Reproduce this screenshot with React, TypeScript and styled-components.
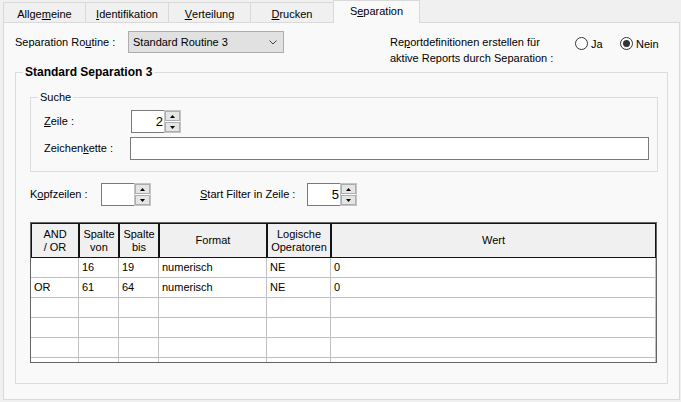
import React from 'react';
import styled, { createGlobalStyle } from 'styled-components';

const Global = createGlobalStyle`
  html, body { margin: 0; padding: 0; background: #f0f0f0; }
  body { font-family: 'Liberation Sans', Arial, sans-serif; font-size: 11px; color: #000; }
  *, *::before, *::after { box-sizing: border-box; }
`;

const Window = styled.div`
  width: 681px;
  height: 402px;
  background: #f0f0f0;
  display: flex;
  flex-direction: column;
  overflow: hidden;
`;

const TabStrip = styled.div`
  display: flex;
  align-items: flex-end;
  height: 22px;
  padding-left: 3px;
  position: relative;
  z-index: 1;
`;

const Tab = styled.div<{ $w: number; $active?: boolean }>`
  width: ${p => p.$w}px;
  height: ${p => (p.$active ? 23 : 20)}px;
  margin-bottom: ${p => (p.$active ? -1 : 0)}px;
  margin-left: -1px;
  &:first-child { margin-left: 0; }
  border: 1px solid #d9d9d9;
  border-bottom: none;
  background: ${p => (p.$active ? '#f9f9f9' : '#f0f0f0')};
  display: flex;
  justify-content: center;
  align-items: center;
  padding-bottom: ${p => (p.$active ? 3 : 0)}px;
  padding-top: ${p => (p.$active ? 0 : 2)}px;
  position: relative;
  z-index: ${p => (p.$active ? 2 : 1)};
`;

const U = styled.span`
  text-decoration: underline;
  text-underline-offset: 1px;
`;

const Panel = styled.div`
  margin-left: 3px;
  width: 677px;
  height: 378px;
  background: #f9f9f9;
  border: 1px solid #d9d9d9;
  padding-top: 8px;
  display: flex;
  flex-direction: column;
`;

const TopRow = styled.div`
  display: flex;
  height: 34px;
  padding-left: 11px;
`;

const Label = styled.div<{ $w: number; $h?: number }>`
  width: ${p => p.$w}px;
  flex: none;
  line-height: ${p => p.$h ?? 22}px;
  white-space: nowrap;
`;

const Combo = styled.div`
  width: 156px;
  height: 22px;
  border: 1px solid #adadad;
  background: #e1e1e1;
  display: flex;
  align-items: center;
  justify-content: space-between;
  padding: 0 6px 0 4px;
`;

const ReportText = styled.div`
  margin-left: 106px;
  width: 185px;
  padding-top: 3px;
  line-height: 16px;
  white-space: nowrap;
`;

const Radios = styled.div`
  display: flex;
  padding-top: 6px;
  height: 20px;
`;

const RadioItem = styled.div<{ $w?: number }>`
  display: flex;
  align-items: center;
  width: ${p => (p.$w ? `${p.$w}px` : 'auto')};
  height: 13px;
  gap: 3px;
`;

const RadioCircle = styled.span<{ $checked?: boolean }>`
  width: 13px;
  height: 13px;
  border-radius: 50%;
  border: 1px solid #333;
  background: #fff;
  display: flex;
  align-items: center;
  justify-content: center;
  &::after {
    content: '';
    display: ${p => (p.$checked ? 'block' : 'none')};
    width: 7px;
    height: 7px;
    border-radius: 50%;
    background: #333;
  }
`;

const Group = styled.fieldset<{ $w?: number }>`
  margin: 0;
  padding: 0;
  border: 1px solid #dcdcdc;
  min-width: 0;
`;

const MainGroup = styled(Group)`
  margin-left: 11px;
  width: 653px;
`;

const Legend = styled.legend<{ $bold?: boolean }>`
  margin-left: 7px;
  padding: 0 2px;
  line-height: 14px;
  font-size: ${p => (p.$bold ? 12 : 11)}px;
  font-weight: ${p => (p.$bold ? 700 : 400)};
`;

const MainBody = styled.div`
  padding: 11px 9px 20px 14px;
  display: flex;
  flex-direction: column;
`;

const SucheBody = styled.div`
  padding: 6px 8px 11px 13px;
  display: flex;
  flex-direction: column;
  gap: 4px;
`;

const FieldRow = styled.div<{ $mt?: number }>`
  display: flex;
  height: 23px;
  margin-top: ${p => p.$mt ?? 0}px;
`;

const TextBox = styled.div`
  flex: 1;
  border: 1px solid #7a7a7a;
  background: #fff;
`;

const Spin = styled.div`
  display: flex;
  width: 50px;
  height: 23px;
  flex: none;
`;

const SpinEdit = styled.div`
  flex: 1;
  border: 1px solid #7a7a7a;
  border-right: none;
  background: #fff;
  text-align: right;
  padding-right: 1px;
  font-size: 13px;
  line-height: 21px;
`;

const SpinButtons = styled.div`
  width: 17px;
  border: 1px solid #c4c4c4;
  display: flex;
  flex-direction: column;
  gap: 1px;
  background: #fff;
`;

const SpinButton = styled.div`
  flex: 1;
  background: #e5e5e5;
  border: 1px solid #adadad;
  display: flex;
  align-items: center;
  justify-content: center;
`;

const Spacer = styled.div<{ $w: number }>`
  width: ${p => p.$w}px;
  flex: none;
`;

const TableFrame = styled.div`
  margin-top: 16px;
  width: 627px;
  height: 141px;
  border: 1px solid #646464;
  background: #fff;
  overflow: hidden;
`;

const cols = '48px 40px 40px 108px 64px 325px';

const HeaderRow = styled.div`
  display: grid;
  grid-template-columns: ${cols};
`;

const HeaderCell = styled.div`
  height: 35px;
  border: 1px solid #141414;
  background: #f0f0f0;
  display: flex;
  align-items: center;
  justify-content: center;
  text-align: center;
  line-height: 13px;
`;

const BodyRow = styled.div`
  display: grid;
  grid-template-columns: ${cols};
  height: 20px;
`;

const BodyCell = styled.div`
  border-right: 1px solid #c0c0c0;
  border-bottom: 1px solid #c0c0c0;
  padding-left: 3px;
  line-height: 19px;
  white-space: nowrap;
  overflow: hidden;
`;

const Chevron = () => (
  <svg width="8" height="5" viewBox="0 0 8 5">
    <polyline points="0.5,0.5 4,4 7.5,0.5" fill="none" stroke="#444" strokeWidth="1" />
  </svg>
);

const Up = () => (
  <svg width="5" height="3" viewBox="0 0 5 3">
    <polygon points="0,3 2.5,0 5,3" fill="#000" />
  </svg>
);

const Down = () => (
  <svg width="5" height="3" viewBox="0 0 5 3">
    <polygon points="0,0 5,0 2.5,3" fill="#000" />
  </svg>
);

const Spinner: React.FC<{ value?: string }> = ({ value }) => (
  <Spin>
    <SpinEdit>{value}</SpinEdit>
    <SpinButtons>
      <SpinButton><Up /></SpinButton>
      <SpinButton><Down /></SpinButton>
    </SpinButtons>
  </Spin>
);

const rows: string[][] = [
  ['', '16', '19', 'numerisch', 'NE', '0'],
  ['OR', '61', '64', 'numerisch', 'NE', '0'],
  ['', '', '', '', '', ''],
  ['', '', '', '', '', ''],
  ['', '', '', '', '', ''],
  ['', '', '', '', '', ''],
];

export default function App() {
  return (
    <>
      <Global />
      <Window>
        <TabStrip>
          <Tab $w={83}>Allge<U>m</U>eine</Tab>
          <Tab $w={84}><U>I</U>dentifikation</Tab>
          <Tab $w={83}><U>V</U>erteilung</Tab>
          <Tab $w={84}><U>D</U>rucken</Tab>
          <Tab $w={87} $active>S<U>e</U>paration</Tab>
        </TabStrip>
        <Panel>
          <TopRow>
            <Label $w={113}>Separation Ro<U>u</U>tine :</Label>
            <Combo>
              <span>Standard Routine 3</span>
              <Chevron />
            </Combo>
            <ReportText>
              Re<U>p</U>ortdefinitionen erstellen für
              <br />
              aktive Reports durch Separation :
            </ReportText>
            <Radios>
              <RadioItem $w={45}>
                <RadioCircle />
                <span>Ja</span>
              </RadioItem>
              <RadioItem>
                <RadioCircle $checked />
                <span>Nein</span>
              </RadioItem>
            </Radios>
          </TopRow>
          <MainGroup>
            <Legend $bold>Standard Separation 3</Legend>
            <MainBody>
              <Group>
                <Legend>Suche</Legend>
                <SucheBody>
                  <FieldRow>
                    <Label $w={87} $h={23}><U>Z</U>eile :</Label>
                    <Spinner value="2" />
                  </FieldRow>
                  <FieldRow>
                    <Label $w={86} $h={23}>Zeichen<U>k</U>ette :</Label>
                    <TextBox />
                  </FieldRow>
                </SucheBody>
              </Group>
              <FieldRow $mt={11}>
                <Label $w={71} $h={23}>K<U>o</U>pfzeilen :</Label>
                <Spinner />
                <Spacer $w={49} />
                <Label $w={107} $h={23}><U>S</U>tart Filter in Zeile :</Label>
                <Spinner value="5" />
              </FieldRow>
              <TableFrame>
                <HeaderRow>
                  <HeaderCell>AND<br />/ OR</HeaderCell>
                  <HeaderCell>Spalte<br />von</HeaderCell>
                  <HeaderCell>Spalte<br />bis</HeaderCell>
                  <HeaderCell>Format</HeaderCell>
                  <HeaderCell>Logische<br />Operatoren</HeaderCell>
                  <HeaderCell>Wert</HeaderCell>
                </HeaderRow>
                {rows.map((r, i) => (
                  <BodyRow key={i}>
                    {r.map((c, j) => (
                      <BodyCell key={j}>{c}</BodyCell>
                    ))}
                  </BodyRow>
                ))}
              </TableFrame>
            </MainBody>
          </MainGroup>
        </Panel>
      </Window>
    </>
  );
}
